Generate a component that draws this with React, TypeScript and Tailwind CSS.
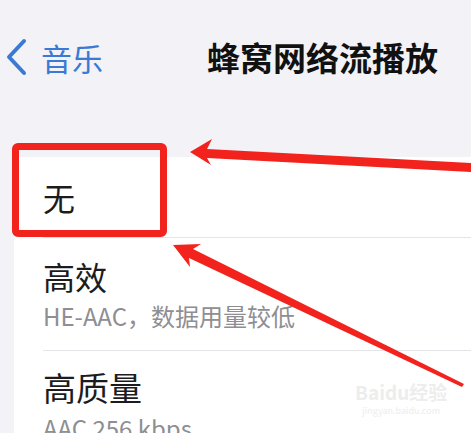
import React from 'react';

const font = { fontFamily: '"Noto Sans CJK SC", "Noto Sans", sans-serif' };

// Red annotation arrows drawn over the screenshot.
const Arrows: React.FC = () => (
  <svg
    className="pointer-events-none absolute left-0 top-0"
    width="471"
    height="433"
    viewBox="0 0 471 433"
  >
    <polygon
      fill="#f2231d"
      points="190,152 212,139 207,149 471,163 471,172 207,158 211,165"
    />
    <polygon
      fill="#f2231d"
      points="173,245 201,244 193,249 464,384 462,387 189,258 190,267"
    />
  </svg>
);

const App: React.FC = () => {
  return (
    <div className="relative h-[433px] w-[471px] overflow-hidden bg-[#f2f2f7]" style={font}>
      {/* nav bar */}
      <div className="flex h-[114px] items-center">
        <div className="flex items-center pl-[5px] text-[#3a7ad4]">
          <svg width="22" height="38" viewBox="0 0 22 38" fill="none">
            <path
              d="M19 3 L4 19 L19 35"
              stroke="currentColor"
              strokeWidth="4"
              strokeLinecap="round"
              strokeLinejoin="round"
            />
          </svg>
          <span className="ml-[14px] text-[31px] leading-none">音乐</span>
        </div>
        <span className="ml-[104px] text-[33px] font-bold leading-none text-[#111]">
          蜂窝网络流播放
        </span>
      </div>

      {/* option list */}
      <div className="ml-[14px] mt-[43px] bg-white text-[#1c1c1e]">
        <div className="pl-[29px]">
          <div className="flex h-[81px] items-center border-b border-[#e3e3e8]">
            <span className="text-[32px] leading-none">无</span>
          </div>
        </div>
        <div className="pl-[29px]">
          <div className="flex h-[113px] flex-col justify-center border-b border-[#e3e3e8]">
            <span className="text-[32px] leading-none">高效</span>
            <span className="mt-[12px] text-[24px] leading-none text-[#8e8e93]">
              HE-AAC，数据用量较低
            </span>
          </div>
        </div>
        <div className="pl-[29px] pt-[20px]">
          <div className="flex flex-col">
            <span className="text-[33px] leading-none">高质量</span>
            <span className="mt-[12px] text-[24px] leading-none text-[#8e8e93]">
              AAC 256 kbps
            </span>
          </div>
        </div>
      </div>

      {/* baidu watermark */}
      <div className="absolute left-[355px] top-[382px] flex flex-col items-center whitespace-nowrap text-[#ededed]">
        <span className="text-[19px] font-bold leading-none">Baidu经验</span>
        <span className="mt-[5px] text-[9px] leading-none">jingyan.baidu.com</span>
      </div>

      {/* annotation */}
      <div className="absolute left-[12px] top-[143px] h-[94px] w-[155px] rounded-[6px] border-[7px] border-[#f2231d]" />
      <Arrows />
    </div>
  );
};

export default App;
